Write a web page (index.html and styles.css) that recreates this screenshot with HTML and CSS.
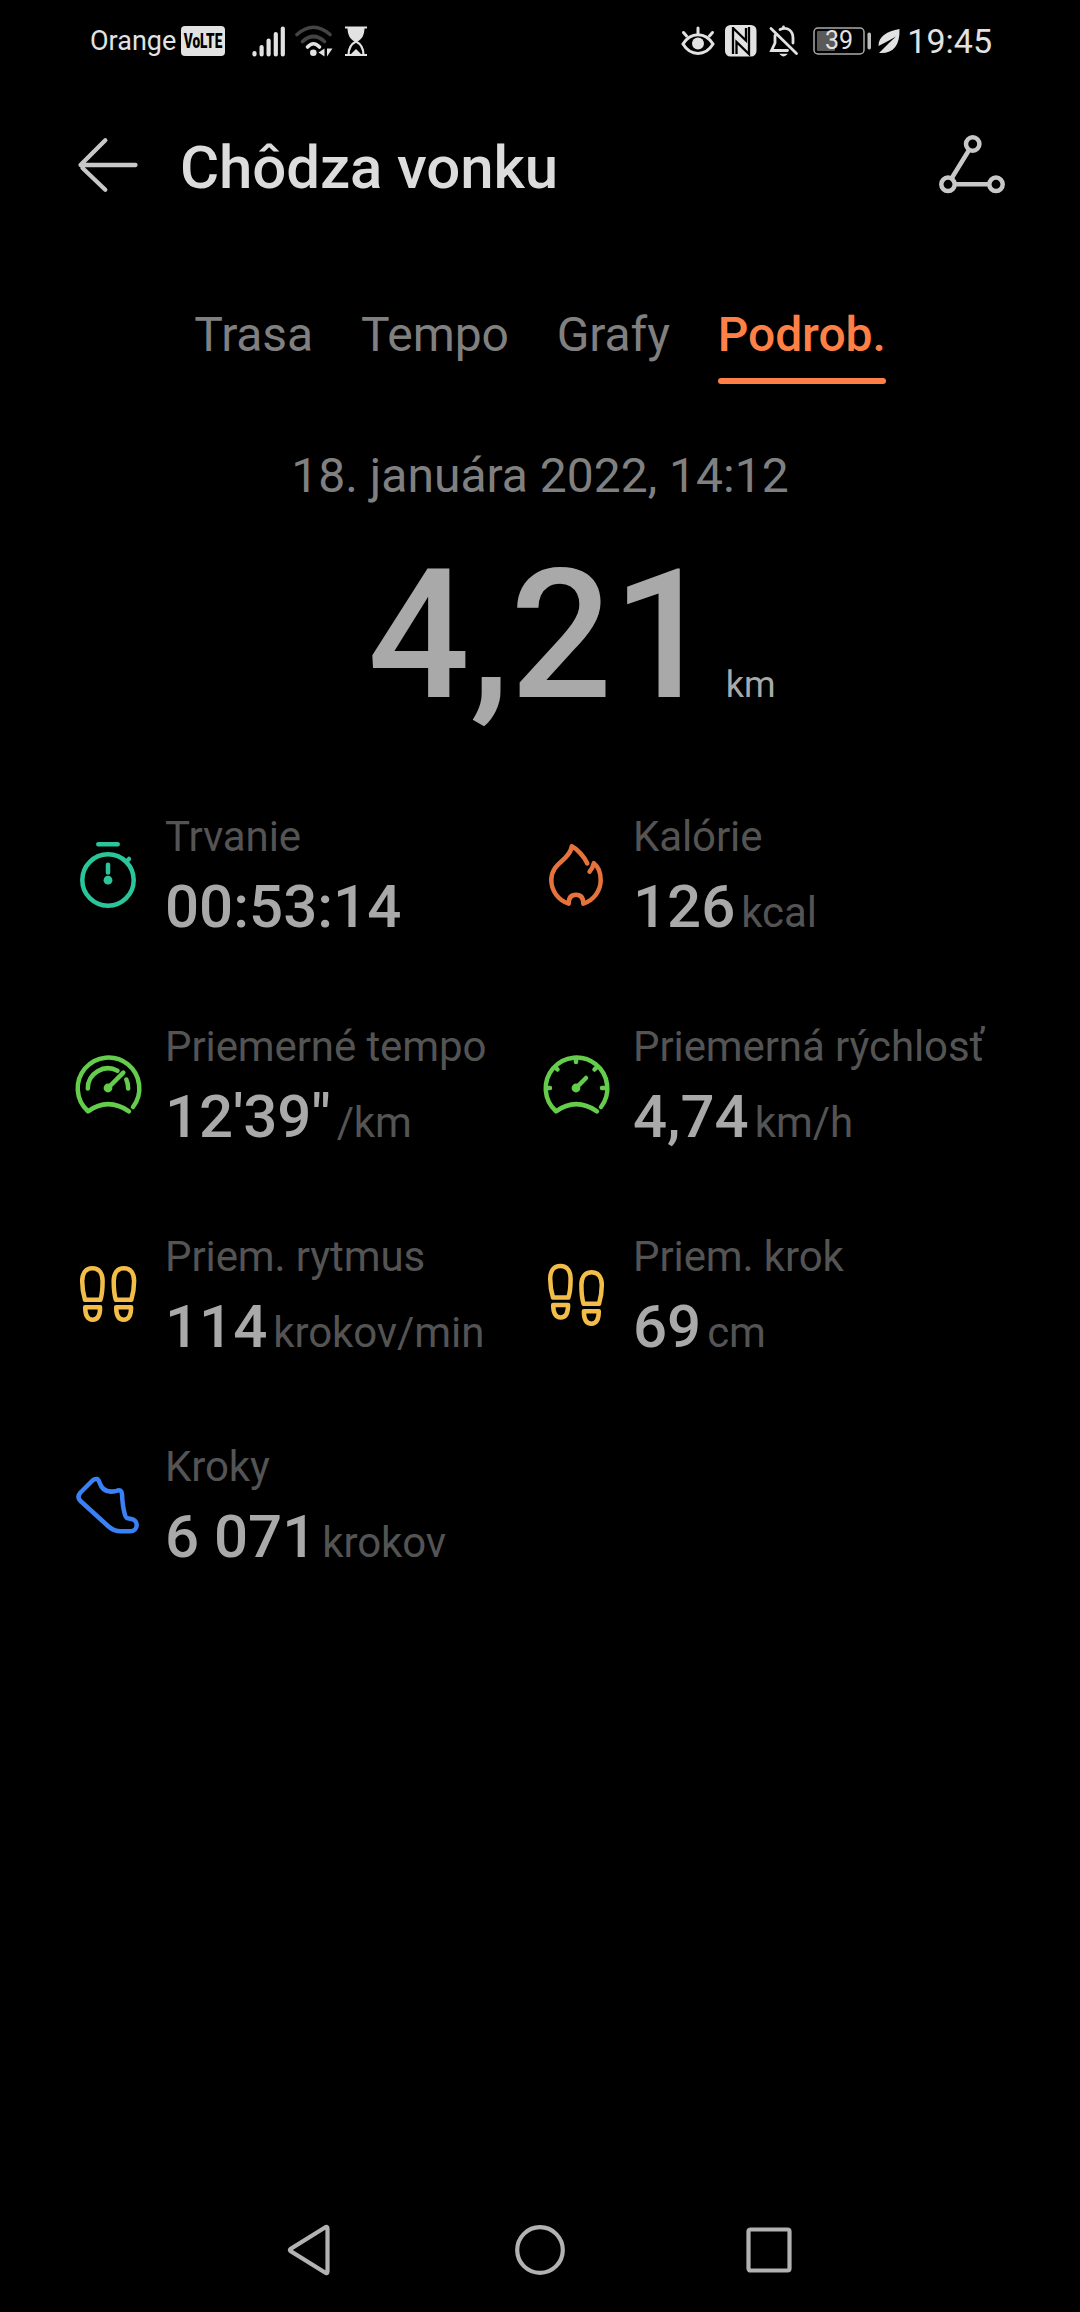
FILE: index.html
```html
<!DOCTYPE html>
<html lang="sk">
  <head>
    <meta charset="UTF-8" />
    <meta name="viewport" content="width=device-width, initial-scale=1.0" />
    <title>Chôdza vonku</title>
    <link rel="stylesheet" href="styles.css">
  </head>
  <body>
    <div class="status-bar">
      <div class="status-left">
        <span class="carrier">Orange</span>
        <svg class="volte" width="44" height="30" viewBox="0 0 44 30">
          <rect width="44" height="30" rx="4" fill="#e2e2e2" />
          <text transform="translate(22 22) scale(0.68 1)" text-anchor="middle">VoLTE</text>
        </svg>
        <svg class="signal" width="34" height="32" viewBox="0 0 34 32">
          <path d="M2.5 28v1.5M9.6 22v7.5M16.6 15.5v14M23.8 9v20.5M30.8 3.500v26" stroke="#e2e2e2" stroke-width="4.2" stroke-linecap="round" />
        </svg>
        <svg class="wifi" width="38" height="32" viewBox="0 0 38 32" fill="none" stroke-width="3.6" stroke-linecap="round">
          <path d="M2 9.5Q18.5 -5 35 9.5" stroke="#444" />
          <path d="M7.5 16.5Q18.5 6.5 29.5 16.5" stroke="#444" />
          <path d="M12.5 22Q18.5 15.5 24.5 22" stroke="#e2e2e2" />
          <circle cx="18.3" cy="27.8" r="3.3" fill="#e2e2e2" />
          <path d="M29.5 23.5v8l-6-4zM32 23.5v8l5.5-8z" fill="#e2e2e2" />
        </svg>
        <svg width="24" height="32" viewBox="0 0 24 32">
          <path d="M1 2.5H23M1 30H23" stroke="#e2e2e2" stroke-width="2.2" />
          <path d="M3.5 2.5H20.5C20.5 10 18 14 13.5 16.5H10.5C6 14 3.5 10 3.5 2.5Z" fill="#e2e2e2" />
          <path d="M4.5 30C4.5 23 7 19 12 16.5C17 19 19.5 23 19.5 30" fill="none" stroke="#e2e2e2" stroke-width="2.2" />
          <path d="M6.500 29.5L12 24L17.5 29.5Z" fill="#e2e2e2" />
        </svg>
      </div>
      <div class="status-right">
        <svg width="34" height="32" viewBox="0 0 34 32" fill="none" stroke="#e2e2e2" stroke-linecap="round">
          <path d="M2 19C9.5 6.5 24.5 6.5 32 19C24.5 31.5 9.5 31.5 2 19Z" stroke-width="3" />
          <path d="M17 3V8.500M2.500 7.500L5.500 11M31.500 7.500L28.500 11" stroke-width="3" />
          <circle cx="17" cy="18.5" r="6" fill="#e2e2e2" stroke="none" />
        </svg>
        <svg class="nfc" width="32" height="32" viewBox="0 0 32 32">
          <rect width="31.500" height="31.500" rx="5.500" fill="#e2e2e2" />
          <path d="M8 2V29M8 3L21 15.500V3M24 2V29L11.500 17V29" fill="none" stroke="#000" stroke-width="2.300" />
        </svg>
        <svg class="bell" width="30" height="32" viewBox="0 0 30 32" fill="none" stroke="#e2e2e2" stroke-width="2.8" stroke-linecap="round">
          <path d="M2 3.5L27.5 28.5M11 4.500C19 1 24 6.500 24 13V18M14.5 3.500V2M6 10.5V18L2.5 25.5H18.5" />
          <path d="M12 29.500H17Q14.500 32 12 29.500Z" stroke-width="1.500" fill="#e2e2e2" />
        </svg>
        <svg class="battery" width="60" height="28" viewBox="0 0 60 28">
          <rect x="1" y="1" width="50" height="26" rx="4" fill="none" stroke="#aaa" stroke-width="1.5" />
          <rect x="4" y="4" width="18" height="20" rx="1" fill="#5a5a5a" />
          <text x="26" y="22" text-anchor="middle">39</text>
          <rect x="54.5" y="5.5" width="3.5" height="17" rx="1.7" fill="#bdbdbd" />
        </svg>
        <svg class="leaf" width="24" height="26" viewBox="0 0 24 26">
          <path d="M22.5 1C10 3.500 1.500 8 1.500 18L12 12.500L19 8.500L12 15L2 25C16 26 23 18 22.500 1Z" fill="#e2e2e2" />
        </svg>
        <span class="clock">19:45</span>
      </div>
    </div>

    <div class="header">
      <svg width="62" height="60" viewBox="0 0 62 60" fill="none" stroke="#c8c8c8" stroke-width="4.3" stroke-linecap="round" stroke-linejoin="round">
        <path d="M58.5 30H3.500L28.300 5.200M5.500 33L28.300 54.800" />
      </svg>
      <h1>Chôdza vonku</h1>
      <svg class="track" width="68" height="60" viewBox="0 0 68 60" fill="none" stroke="#c8c8c8" stroke-width="4.5">
        <circle cx="34.7" cy="9" r="6.7" />
        <circle cx="10" cy="49.3" r="6.7" />
        <circle cx="58" cy="49.3" r="6.7" />
        <path d="M31.2 14.8L13.5 43.5M16.7 49.3H51.3" />
      </svg>
    </div>

    <div class="tabs">
      <div class="tab">Trasa</div>
      <div class="tab">Tempo</div>
      <div class="tab">Grafy</div>
      <div class="tab active">Podrob.</div>
    </div>

    <div class="date">18. januára 2022, 14:12</div>
    <div class="distance">4,21<span class="distance-unit">km</span></div>

    <div class="stats">
      <div class="stat">
        <svg class="icon teal" viewBox="0 0 72 72">
          <path d="M26.3 4.3H45.7M54.5 21.5L57 19M36 24.8V32.5" />
          <circle cx="36" cy="40" r="25.7" />
          <circle class="dot" cx="36" cy="40.2" r="4.4" />
        </svg>
        <div>
          <div class="label">Trvanie</div>
          <div class="value">00:53:14</div>
        </div>
      </div>

      <div class="stat">
        <svg class="icon orange" viewBox="0 0 72 72">
          <path d="M47.3 23.5C44 16 37 9 31.8 6.3C29.5 21 11.3 22.5 11.3 40C11.3 51 18.5 60.5 28.7 63.7C28.7 58 31 54.8 36 54.8S43.3 58 43.3 63.7C53.5 60.5 60.7 51 60.7 40C60.7 33 58 26.5 53.8 23.2C53 27 51.5 29.5 49.5 31.7" />
        </svg>
        <div>
          <div class="label">Kalórie</div>
          <div class="value">126<span class="unit">kcal</span></div>
        </div>
      </div>

      <div class="stat">
        <svg class="icon green" viewBox="0 0 72 72">
          <path d="M61 57A30.8 30.8 0 1 0 16 61.3Q36 47 57 61.3" />
          <path d="M15.8 38.5A20.2 20.2 0 0 1 45.5 20.7M54.3 29.5A20.2 20.2 0 0 1 56.2 38.5M36 38L51.3 22.7" />
          <circle class="dot" cx="36" cy="38" r="4.4" />
        </svg>
        <div>
          <div class="label">Priemerné tempo</div>
          <div class="value">12'39"<span class="unit">/km</span></div>
        </div>
      </div>

      <div class="stat">
        <svg class="icon green" viewBox="0 0 72 72">
          <path d="M61 57A30.8 30.8 0 1 0 16 61.3Q36 47 57 61.3" />
          <path d="M36 8V12M6 38H10M62 38H66M15 17L17.5 19.5M57 17L54.5 19.5M36 38L46 28" />
          <circle class="dot" cx="36" cy="38" r="4.4" />
        </svg>
        <div>
          <div class="label">Priemerná rýchlosť</div>
          <div class="value">4,74<span class="unit">km/h</span></div>
        </div>
      </div>

      <div class="stat">
        <svg class="icon yellow" viewBox="0 0 72 72">
          <g id="sole">
            <path d="M13 39.8C11.5 35 10.2 28 10.2 21C10.2 13 14 8.3 20.4 8.3S30.6 13 30.6 21C30.6 28 30 35 28.4 39.8Z" />
            <path d="M13.2 47.2H28.1C28.1 55 26 59.7 20.7 59.7S13.2 55 13.2 47.2Z" />
          </g>
          <use href="#sole" transform="translate(72.3 0) scale(-1 1)" />
        </svg>
        <div>
          <div class="label">Priem. rytmus</div>
          <div class="value">114<span class="unit">krokov/min</span></div>
        </div>
      </div>

      <div class="stat">
        <svg class="icon yellow" viewBox="0 0 72 72">
          <use href="#sole" transform="translate(0 -2.3)" />
          <use href="#sole" transform="translate(72 4) scale(-1 1)" />
        </svg>
        <div>
          <div class="label">Priem. krok</div>
          <div class="value">69<span class="unit">cm</span></div>
        </div>
      </div>

      <div class="stat">
        <svg class="icon blue" viewBox="0 0 72 72">
          <path d="M20.5 10.5L8.5 22.5Q4.5 27 8.5 31L36.5 56.5Q42 61.3 49 61.3H58.5C66.5 61 67 49.5 58.5 48.7C55.5 48.5 54 48.5 53 45C51 38 50.3 32 50 24Q49.7 19 44.5 20.8C35 23.5 30 20 27.5 12.5Q25.5 6.5 20.5 10.5Z" />
        </svg>
        <div>
          <div class="label">Kroky</div>
          <div class="value">6 071<span class="unit">krokov</span></div>
        </div>
      </div>
    </div>

    <div class="nav-bar">
      <svg width="44" height="52" viewBox="0 0 44 52">
        <path d="M40.5 4.5Q40.5 2 38 3.5L3.5 25Q2.500 26 3.500 27L38 48.5Q40.5 50 40.5 47.5Z" />
      </svg>
      <svg width="52" height="52" viewBox="0 0 52 52">
        <circle cx="26" cy="26" r="22.8" />
      </svg>
      <svg class="recents" width="46" height="46" viewBox="0 0 46 46">
        <rect x="2.5" y="2.5" width="41" height="41" rx="2" />
      </svg>
    </div>
  </body>
</html>
```
FILE: styles.css
```css
* {
  box-sizing: border-box;
}
body {
  display: flex;
  flex-direction: column;
  height: 2312px;
  margin: 0;
  background: #000;
  color: #a9a9a9;
  font-family: Roboto, sans-serif;
}
svg {
  display: block;
  flex: none;
}
.status-bar {
  display: flex;
  justify-content: space-between;
  align-items: center;
  height: 82px;
  padding: 0 88px 0 90px;
  color: #e2e2e2;
}
.status-left,
.status-right {
  display: flex;
  align-items: center;
}
.carrier {
  width: 91px;
  font-size: 27px;
}
.volte text {
  font-size: 20px;
  font-weight: 900;
}
.signal {
  margin-left: 27px;
  margin-right: 9px;
}
.wifi {
  margin-right: 11px;
}
.nfc {
  margin: 0 12px 0 10px;
}
.battery {
  margin-left: 14px;
}
.battery text {
  fill: #e2e2e2;
  font-size: 25px;
}
.leaf {
  margin: 0 6px 0 4px;
}
.clock {
  font-size: 34px;
}
.header {
  display: flex;
  align-items: center;
  height: 166px;
  padding: 0 74px 0 77px;
}
.header h1 {
  margin: 0;
  padding: 5px 0 0 41px;
  color: #dcdcdc;
  font-size: 60px;
  font-weight: 500;
  letter-spacing: -0.1px;
}
.track {
  margin-left: auto;
}
.tabs {
  display: flex;
  justify-content: center;
  gap: 48px;
  margin-top: 59px;
}
.tab {
  padding-bottom: 15px;
  color: #808080;
  font-size: 48px;
  line-height: 56px;
  letter-spacing: -0.1px;
}
.tab.active {
  position: relative;
  padding-bottom: 21px;
  color: #ff8046;
  font-weight: 500;
}
.tab.active::after {
  content: "";
  position: absolute;
  left: 0;
  right: 0;
  bottom: 0;
  height: 6px;
  border-radius: 3px;
  background: #ff8046;
}
.date {
  margin-top: 64px;
  color: #808080;
  font-size: 48px;
  line-height: 56px;
  text-align: center;
}
.distance {
  margin-top: 42px;
  padding-left: 63px;
  font-size: 180px;
  font-weight: 500;
  line-height: 180px;
  text-align: center;
}
.distance-unit {
  margin-left: 11px;
  font-size: 36px;
  font-weight: 400;
  line-height: 1;
}
.stats {
  display: grid;
  grid-template-columns: 468px 468px;
  grid-auto-rows: 130px;
  row-gap: 80px;
  margin-top: 86px;
  padding-left: 72px;
}
.stat {
  display: flex;
  gap: 21px;
  white-space: nowrap;
}
.label {
  margin-bottom: 10px;
  color: #545454;
  font-size: 42px;
  line-height: 50px;
  letter-spacing: -0.1px;
}
.value {
  font-size: 60px;
  font-weight: 500;
  line-height: 70px;
}
.unit {
  margin-left: 6px;
  color: #545454;
  font-size: 42px;
  font-weight: 400;
  letter-spacing: -0.1px;
}
.icon {
  width: 72px;
  height: 72px;
  margin-top: 28px;
  fill: none;
  stroke: currentColor;
  stroke-width: 4.5;
  stroke-linecap: round;
  stroke-linejoin: round;
}
.icon .dot {
  fill: currentColor;
  stroke: none;
}
.teal {
  color: #2bc59b;
}
.orange {
  color: #e6733c;
}
.green {
  color: #64cd4b;
}
.yellow {
  color: #f3be48;
}
.blue {
  color: #3c80f5;
}
.nav-bar {
  display: flex;
  align-items: center;
  gap: 183px;
  height: 124px;
  margin-top: auto;
  padding-left: 287px;
  fill: none;
  stroke: #b2b2b2;
  stroke-width: 4.2;
}
.recents {
  margin-left: -3px;
}
```
